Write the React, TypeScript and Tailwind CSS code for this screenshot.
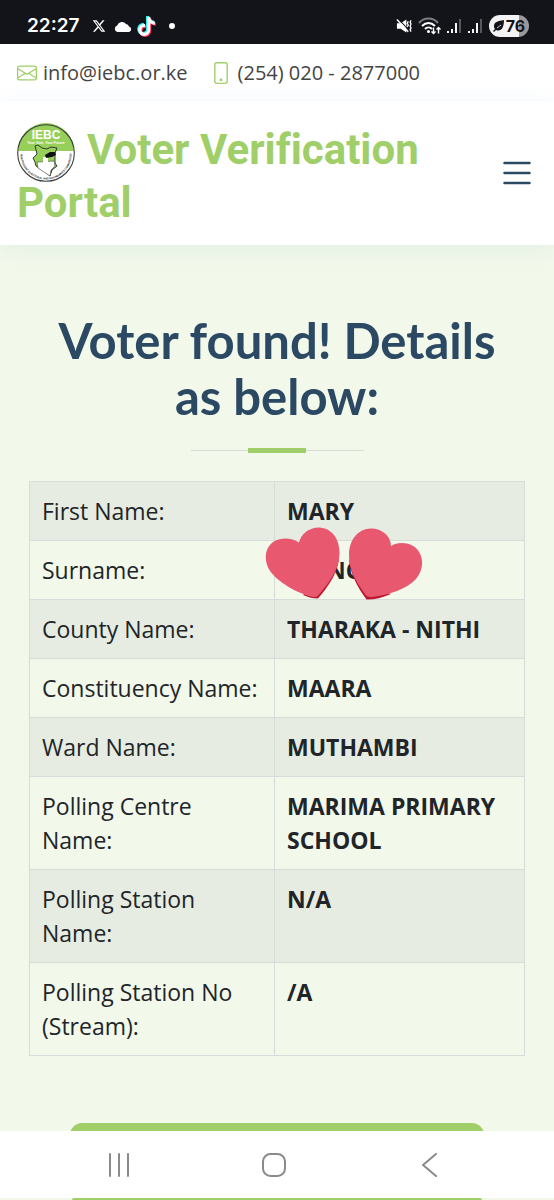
import { BsEnvelope, BsList, BsPhone } from 'react-icons/bs'
import { FaXTwitter } from 'react-icons/fa6'
import { FaTiktok } from 'react-icons/fa'

const details = [
  { label: 'First Name:', value: 'MARY' },
  { label: 'Surname:', value: 'NG', covered: true },
  { label: 'County Name:', value: 'THARAKA - NITHI' },
  { label: 'Constituency Name:', value: 'MAARA' },
  { label: 'Ward Name:', value: 'MUTHAMBI' },
  { label: 'Polling Centre Name:', value: 'MARIMA PRIMARY SCHOOL' },
  { label: 'Polling Station Name:', value: 'N/A' },
  { label: 'Polling Station No (Stream):', value: '/A' },
]

function SignalBars() {
  return (
    <svg viewBox="0 0 15 16" className="w-[15px] h-4" fill="none" strokeWidth="1.900">
      <path d="M1 15v-2M5 15v-4M9 15V5" stroke="#fff" />
      <path d="M13 15V1" stroke="#5b5c62" />
    </svg>
  )
}

function StatusBar() {
  return (
    <div className="flex shrink-0 items-center justify-between h-11 pt-2 pl-[27px] pr-[25px] bg-[#13141a] text-white">
      <div className="flex items-center">
        <span className="font-['Inter',sans-serif] text-[19px] leading-6 font-semibold">22:27</span>
        <FaXTwitter className="ml-3 w-[14px] h-[14px]" />
        <svg viewBox="0 0 18 11" className="ml-2 w-[18px] h-[11px]" fill="#fff">
          <path d="M3.500 11A3.300 3.300 0 0 1 3.200 4.600A5 5 0 0 1 12 3A3.800 3.800 0 0 1 15 5.400A2.900 2.900 0 0 1 15 11z" />
        </svg>
        <span className="relative ml-[6px] w-[17px] h-[19px]">
          <FaTiktok className="absolute -left-px -top-px w-[17px] h-[19px] text-[#25f4ee]" />
          <FaTiktok className="absolute left-px top-px w-[17px] h-[19px] text-[#fe2c55]" />
          <FaTiktok className="absolute left-0 top-0 w-[17px] h-[19px]" />
        </span>
        <span className="ml-[14px] w-[6px] h-[6px] rounded-full bg-white" />
      </div>

      <div className="flex items-center gap-[6px]">
        {/* muted, vibrating */}
        <svg viewBox="0 0 17 16" className="w-4 h-4" fill="none" stroke="#fff">
          <path d="M1 5h4l6-4v14l-6-4H1z" fill="#fff" stroke="none" />
          <path d="M2 0l13 14" stroke="#13141a" strokeWidth="1.1" />
          <path d="M1 1l12 13" strokeWidth="1.5" />
          <path d="M13 3l-1 2 1 2-1 2M16 2l-1 2 1 2-1 2 1 2-1 2 1 2" strokeWidth="1.4" />
        </svg>
        <svg viewBox="0 0 23 18" className="w-[23px] h-[18px]" fill="none" stroke="#fff" strokeWidth="2">
          <path d="M1 6c5-6 14-6 19 0" stroke="#7c7d82" />
          <path d="M4 9c4-4 9-4 13 0M7 12c2-2 5-2 7 0" />
          <circle cx="10.500" cy="14.500" r="1.500" fill="#fff" stroke="none" />
          <path d="M15.500 10.500v6M13.500 14.500l2 2 2-2M20.500 16.500v-6M18.500 12.500l2-2 2 2" strokeWidth="1.4" />
        </svg>
        <SignalBars />
        <SignalBars />
        <span className="flex items-center justify-center gap-px h-[22px] w-10 rounded-full bg-linear-to-r from-[#f3f3f5] from-75% to-[#98989d] to-75% text-[#13141a]">
          <svg viewBox="0 0 12 12" className="w-3 h-3">
            <path d="M11 0C5 1 1 2 1 6c0 1 0 2 1 3L0 11l1 1 2-2c5 2 8-2 8-10z" fill="#13141a" />
            <path d="M4 8l4-3" stroke="#f3f3f5" strokeWidth=".8" />
          </svg>
          <span className="font-['Inter',sans-serif] text-[16px] leading-5 font-bold">76</span>
        </span>
      </div>
    </div>
  )
}

function Logo() {
  return (
    <svg viewBox="0 0 58 58" className="inline-block w-[58px] h-[58px] mr-3 -my-2 align-middle overflow-visible" role="img" aria-label="IEBC">
      <circle cx="29" cy="29" r="28.300" fill="#fff" />
      <path d="M1 27a28 28 0 0 1 56 0z" fill="#97cf5b" />
      <circle cx="29" cy="29" r="28.300" fill="none" stroke="#3a3f3a" strokeWidth="1.100" />
      <text x="29" y="14.500" textAnchor="middle" fontFamily="Liberation Sans, sans-serif" fontSize="12" fontWeight="700" fill="#fff">IEBC</text>
      <text x="29" y="19.500" textAnchor="middle" fontFamily="Liberation Sans, sans-serif" fontSize="3.500" fontWeight="700" fill="#fff">Your Vote, Your Future</text>
      <path
        d="M18 22l3-1 4 3 5 1 4-2 6 1-2 5v10l2 3-5 4-2 6-6-5-8-5-1-4-2-4 4-4z"
        fill="#97cf5b"
        stroke="#2f3b2c"
        strokeWidth="1"
        strokeLinejoin="round"
      />
      <path d="M20 38l17-1 1 5-4 4-1 6-6-4-6-4z" fill="#fff" stroke="#444" strokeWidth=".6" />
      <path d="M26 33h5v5h-5z" fill="#fff" />
      <path d="M28 31l5-3h5l1 3-4 2-6 1z" fill="#111" />
      <path id="rim" d="M3.500 30a25.500 25.500 0 0 0 51 0" fill="none" />
      <text fontFamily="Liberation Sans, sans-serif" fontSize="2.700" fontWeight="700" fill="#222">
        <textPath href="#rim" startOffset="50%" textAnchor="middle">INDEPENDENT ELECTORAL AND BOUNDARIES COMMISSION</textPath>
      </text>
    </svg>
  )
}

function Hearts() {
  return (
    <svg viewBox="0 0 158 73" className="absolute -left-[10px] -top-[14px] w-[158px] h-[73px] max-w-none" aria-hidden="true">
      <path d="M74 32C72 48 62 61 53 71.500Q46 71.500 38 68L52 58z" fill="#be1931" />
      <path d="M34 15.500C36 7 44 .5 54 .5C67 1 75 12 74.500 27C74 43 64 56 54 67.500Q52 70.500 48 70C31 66 13 55 5 44C-2 33 0 20 9 14.500C17 10 27 11 34 15.500z" fill="#e8596f" />
      <path d="M84 32C85 47 93 61 101.500 72.500Q112 73 126 67L104 60z" fill="#be1931" />
      <path d="M126 19C126 9 117 1.500 106 1.500C93 1.500 84 13 84 28C84 44 92 56 100 67Q102 70.500 107 70C124 68 142 62 151 52C160 41 159 27 149 19.500C142 15 132 15 126 19z" fill="#e8596f" />
    </svg>
  )
}

export default function App() {
  return (
    <div className="flex flex-col h-screen overflow-hidden bg-[#f2f8ea] font-['Open_Sans','Noto_Sans',sans-serif] text-[#212529]">
      <StatusBar />

      <div className="flex shrink-0 items-center h-[57px] px-[17px] bg-white text-[20px] leading-[30px] text-[#444444]">
        <a href="mailto:info@iebc.or.ke" className="flex items-center gap-[6px]">
          <BsEnvelope className="w-5 h-5 text-[#a0cf6a]" />
          info@iebc.or.ke
        </a>
        <a href="tel:+254202877000" className="flex items-center gap-[6px] ml-[22px]">
          <BsPhone className="w-[22px] h-[22px] text-[#a0cf6a]" />
          (254) 020 - 2877000
        </a>
      </div>

      <header className="relative flex shrink-0 items-center justify-between pt-[22px] pb-4 px-[17px] bg-white shadow-[0_3px_22px_rgba(25,119,204,0.07)]">
        <h1 className="font-['Roboto',sans-serif] text-[42px] leading-[53px] font-bold text-[#a0cf6a] [font-variant-ligatures:none]">
          <a href="#home">
            <Logo />
            Voter Verification Portal
          </a>
        </h1>
        <button type="button" aria-label="Open menu" className="shrink-0 mb-[6px] text-[#2c4964]">
          <BsList className="w-10 h-10" />
        </button>
      </header>

      <main className="flex-1 min-h-0 overflow-hidden px-[29px] pt-[67px]">
        <h2 className="px-5 text-center font-['Lato',sans-serif] text-[49px] leading-[56px] font-bold text-[#2c4964]">
          Voter found! Details as below:
        </h2>
        <div className="flex items-center w-[173px] h-[5px] mx-auto mt-6">
          <span className="flex-1 h-px bg-[#d8dcd8]" />
          <span className="w-[58px] h-[5px] bg-[#a0cf6a]" />
          <span className="flex-1 h-px bg-[#d8dcd8]" />
        </div>

        <table className="w-full mt-7 border-collapse border border-[#d6dcd8] text-[23px] leading-[34px]">
          <tbody>
            {details.map((row) => (
              <tr key={row.label} className="odd:bg-[#e6ece1]">
                <th scope="row" className="w-[245px] p-3 border border-[#d6dcd8] text-left align-top font-normal">
                  {row.label}
                </th>
                <td className="relative p-3 border border-[#d6dcd8] align-top font-bold">
                  {row.covered ? <span className="pl-10">{row.value}</span> : row.value}
                  {row.covered && <Hearts />}
                </td>
              </tr>
            ))}
          </tbody>
        </table>

        <div className="px-[41px] pt-[67px]">
          <button type="button" aria-label="Verify another voter" className="block w-full h-[60px] rounded-xl bg-[#a0cf6a]" />
        </div>
      </main>

      <nav className="shrink-0 bg-white">
        <div className="flex items-center justify-around h-[67px] pl-[41px] pr-[46px] text-[#8a8a8a]">
          <button type="button" aria-label="Recent apps">
            <svg viewBox="0 0 24 24" className="w-6 h-6" fill="none" stroke="currentColor" strokeWidth="2" strokeLinecap="round">
              <path d="M3 1v22M12 1v22M21 1v22" />
            </svg>
          </button>
          <button type="button" aria-label="Home">
            <svg viewBox="0 0 24 24" className="w-6 h-6" fill="none" stroke="currentColor" strokeWidth="2">
              <rect x="1" y="1" width="22" height="22" rx="7.500" />
            </svg>
          </button>
          <button type="button" aria-label="Back">
            <svg viewBox="0 0 24 24" className="w-6 h-6" fill="none" stroke="currentColor" strokeWidth="2" strokeLinecap="round" strokeLinejoin="round">
              <path d="M18 1L5 12l13 11" />
            </svg>
          </button>
        </div>
        <div className="h-[2px] px-[72px] bg-[#f2f8ea]">
          <div className="h-full rounded-t-sm bg-[#a0cf6a]" />
        </div>
      </nav>
    </div>
  )
}
